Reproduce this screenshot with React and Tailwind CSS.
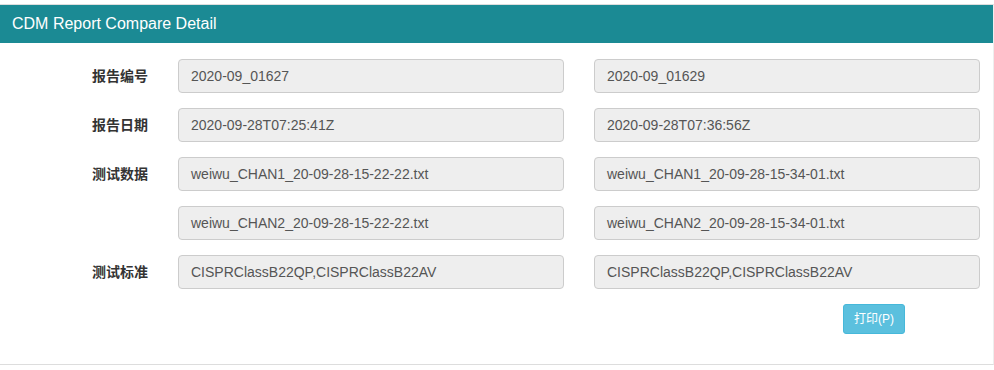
const rows = [
  { label: '报告编号', a: '2020-09_01627', b: '2020-09_01629' },
  { label: '报告日期', a: '2020-09-28T07:25:41Z', b: '2020-09-28T07:36:56Z' },
  { label: '测试数据', a: 'weiwu_CHAN1_20-09-28-15-22-22.txt', b: 'weiwu_CHAN1_20-09-28-15-34-01.txt' },
  { label: '', a: 'weiwu_CHAN2_20-09-28-15-22-22.txt', b: 'weiwu_CHAN2_20-09-28-15-34-01.txt' },
  { label: '测试标准', a: 'CISPRClassB22QP,CISPRClassB22AV', b: 'CISPRClassB22QP,CISPRClassB22AV' },
];

function Field({ value }) {
  return (
    <div className="w-[386px] h-[34px] px-3 flex items-center bg-[#eeeeee] border border-[#cccccc] rounded-[4px] text-[14px] text-[#555555]">
      {value}
    </div>
  );
}

export default function App() {
  return (
    <div
      className="w-[994px] h-[370px] bg-white pt-[4px]"
      style={{ fontFamily: '"Liberation Sans", Arial, "Noto Sans CJK SC", sans-serif' }}
    >
      <div className="h-[361px] border-t border-b border-r border-[#dddddd] border-r-[#eeeeee]">
        <div className="h-[38px] bg-[#1b8a94] px-[12px] flex items-center text-white text-[16px]">
          CDM Report Compare Detail
        </div>
        <div className="pt-[16px] flex flex-col gap-[15px]">
          {rows.map((r, i) => (
            <div key={i} className="flex items-center">
              <div className="w-[148px] text-right text-[14px] font-bold text-[#333333]">
                {r.label}
              </div>
              <div className="ml-[30px]">
                <Field value={r.a} />
              </div>
              <div className="ml-[30px]">
                <Field value={r.b} />
              </div>
            </div>
          ))}
        </div>
        <div className="flex mt-[15px] pl-[843px]">
          <button className="h-[30px] px-[10px] bg-[#5bc0de] border border-[#46b8da] rounded-[3px] text-white text-[12px]">
            打印(P)
          </button>
        </div>
      </div>
    </div>
  );
}
